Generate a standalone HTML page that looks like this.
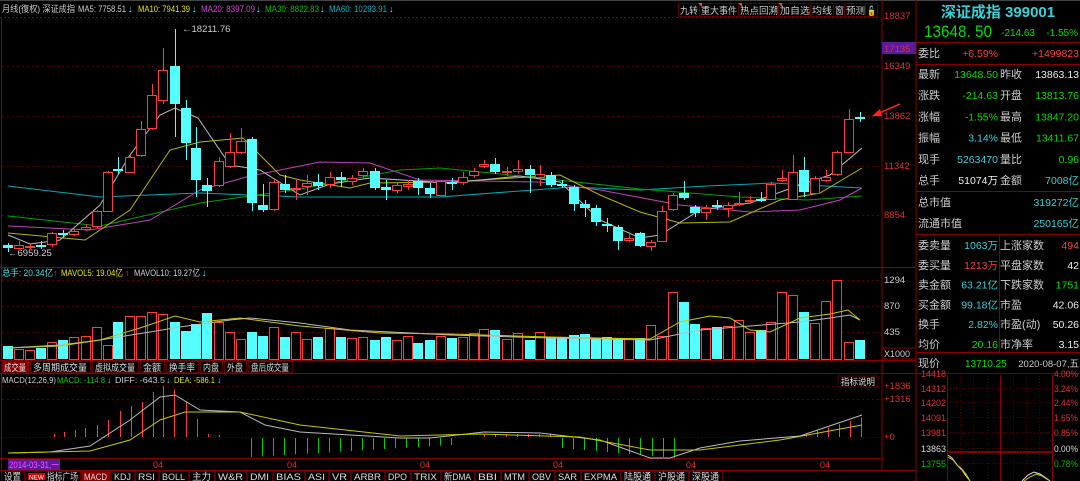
<!DOCTYPE html>
<html><head><meta charset="utf-8">
<style>
html,body{margin:0;padding:0;background:#000;width:1080px;height:481px;overflow:hidden}
svg{display:block}
text{font-family:"Liberation Sans","Noto Sans CJK SC",sans-serif}
</style></head><body>
<svg id="s" width="1080" height="481" xmlns="http://www.w3.org/2000/svg"></svg>
<script>
const S=document.getElementById('s');let h='';
const R='#8a0000',CY='#54ffff',RD='#ff3c3c',GR='#00d000';
function L(x1,y1,x2,y2,c,w,d){h+=`<line x1="${x1}" y1="${y1}" x2="${x2}" y2="${y2}" stroke="${c}" stroke-width="${w||1}"${d?` stroke-dasharray="${d}"`:''}/>`}
function Rc(x,y,w,hh,f,s){h+=`<rect x="${x}" y="${y}" width="${w}" height="${hh}" fill="${f||'none'}"${s?` stroke="${s}"`:''}/>`}
function T(x,y,t,c,sz,a,b,len){h+=`<text x="${x}" y="${y}" fill="${c}" font-size="${sz||11}"${a?` text-anchor="${a}"`:''}${b?' font-weight="bold"':''}${len?` textLength="${len}" lengthAdjust="spacingAndGlyphs"`:''}>${t}</text>`}
function P(pts,c,w){h+=`<polyline fill="none" stroke="${c}" stroke-width="${w||1}" points="${pts.map(p=>p.join(',')).join(' ')}"/>`}
L(0,0.5,1080,0.5,'#444');
L(882,0,882,470,R);L(916,0,916,481,R);
L(0,17.5,880,17.5,R,1,'2,2');
L(0,267.5,916,267.5,R);L(0,360.5,916,360.5,R);L(0,373.5,916,373.5,R);
L(0,458.5,882,458.5,R);L(0,470.5,916,470.5,R);
L(1.5,17,1.5,470,R);
[66,116,166,215].forEach(y=>L(2,y+.5,880,y+.5,'#5a0000',1,'2,3'));
[280,306,332].forEach(y=>L(2,y+.5,880,y+.5,'#5a0000',1,'2,3'));
[386,399].forEach(y=>L(2,y+.5,880,y+.5,'#5a0000',1,'2,3'));
T(2,12,'月线(復权) 深证成指','#ccc',9,0,0,73);
T(78,12,'MA5: 7758.51','#ccc',9,0,0,48);T(128,12,'↓','#54ffff',9);
T(138,12,'MA10: 7941.39','#e6e600',9,0,0,52);T(192,12,'↓','#54ffff',9);
T(201,12,'MA20: 8397.09','#e040e0',9,0,0,54);T(256,12,'↓','#54ffff',9);
T(265,12,'MA30: 8822.83','#00c000',9,0,0,54);T(320,12,'↓','#54ffff',9);
T(329,12,'MA60: 10293.91','#00b8c8',9,0,0,58);T(389,12,'↓','#54ffff',9);
const bt=[['九转',680,18],['重大事件',701,36],['热点回溯',740,38],['加自选',780,30],['均线',812,20],['窗',835,9],['预测',846,19],['🔓',867,9]];
bt.forEach(b=>{Rc(b[1]-1.5,3.5,b[2]+3,13,'#000','#5a0000');T(b[1],14,b[0],'#ccc',9.5,0,0,b[2])});
h+=`<polygon points="698,3 702,3 702,7" fill="${RD}"/><polygon points="738,3 742,3 742,7" fill="${RD}"/><polygon points="778,3 782,3 782,7" fill="${RD}"/>`;
[[18837,19],[16349,69],[13862,119],[11342,169],[8854,218]].forEach(a=>T(884,a[1],a[0],'#e03030',9.5));
Rc(882,42,34,12,'#5a1a9a');T(884,52,'17135','#e03030',9.5);
[[1294,283],[870,309],[435,335]].forEach(a=>T(884,a[1],a[0],'#ccc',9.5));
Rc(882,348,34,11,'#000','#8a0000');T(884,357,'X1000','#ccc',9);
[['+1836',389],['+1316',402],['+0',440]].forEach(a=>T(884,a[1],a[0],'#e03030',9.5));
const C=[[8,245,248,243,252,0],[19,245,248,241,249,1],[30,246,247,243,249,1],[41,245,246,241,249,0],[52,233,244,232,247,1],[63,233,235,230,237,0],[74,231,234,229,236,1],[86,227,229,224,231,1],[97,211,226,210,228,1],[108,172,211,171,212,1],[118,169,170,157,174,0],[130,157,172,155,173,1],[141,129,155,121,157,1],[152,95,128,84,130,1],[163,70,100,48,104,1],[175,66,104,29,137,0],[186,108,143,100,160,0],[196,148,180,127,197,0],[207,185,191,178,207,0],[219,161,185,157,187,1],[230,152,166,133,168,1],[241,141,152,128,154,1],[252,139,203,137,211,0],[263,205,210,184,212,0],[274,182,209,180,211,1],[285,184,190,175,193,0],[296,188,189,180,200,1],[307,183,186,175,195,1],[318,182,186,174,190,0],[330,177,184,172,188,1],[341,177,180,172,187,0],[352,178,181,175,185,1],[363,171,175,168,178,1],[375,171,188,168,190,0],[386,187,190,180,200,0],[397,185,190,182,193,1],[408,184,186,180,190,1],[418,181,188,178,195,0],[430,188,194,183,198,0],[441,181,195,180,196,1],[452,182,183,178,190,0],[463,177,182,172,185,1],[474,171,175,168,178,1],[484,164,166,160,168,1],[495,164,172,158,174,0],[507,171,172,167,176,1],[518,169,171,160,174,1],[530,169,175,165,193,0],[540,174,177,165,186,1],[551,175,185,172,187,0],[562,184,185,180,188,0],[574,187,204,185,211,0],[585,204,208,200,217,0],[596,208,222,205,226,0],[607,224,225,218,232,0],[618,227,241,225,250,0],[629,238,240,232,242,1],[640,233,246,232,247,0],[651,242,246,240,251,1],[662,211,241,206,242,1],[673,195,209,193,211,1],[684,193,198,181,200,0],[695,207,213,205,217,0],[706,208,212,205,220,1],[717,205,207,200,210,0],[728,205,208,202,217,1],[739,203,204,192,206,1],[750,200,201,196,204,1],[761,199,200,192,202,0],[771,184,199,182,200,1],[782,178,180,170,182,1],[793,172,199,155,200,1],[804,170,192,157,197,0],[815,178,193,176,194,1],[826,177,180,170,182,1],[837,152,174,151,176,1],[849,119,152,109,153,1],[860,117,118,112,122,0]];
P([[8,186],[100,197],[200,193],[300,197],[440,197],[573,187],[640,190],[707,186],[773,183],[807,185],[862,188]],'#00a8b8');
P([[8,216],[100,226],[200,203],[300,189],[400,170],[440,168],[540,178],[640,189],[740,197],[807,200],[862,196]],'#00a000');
P([[8,226],[90,230],[150,220],[200,190],[250,176],[320,162],[370,163],[420,180],[540,182],[600,190],[680,205],[750,212],[800,210],[840,200],[862,188]],'#c040c0');
P([[8,233],[85,240],[130,210],[170,150],[200,142],[243,138],[280,175],[300,180],[350,188],[370,183],[450,182],[560,175],[600,195],[640,212],[680,223],[730,222],[780,200],[820,193],[862,168]],'#b8b800');
P([[8,235],[30,244],[60,240],[100,205],[130,155],[160,115],[175,108],[198,118],[230,165],[260,170],[300,195],[330,184],[370,178],[450,183],[520,176],[560,182],[600,220],[640,238],[660,235],[700,210],[750,203],[800,185],[830,175],[862,148]],'#bbb');
C.forEach(c=>{const col=c[5]?RD:CY;L(c[0]+.5,c[3],c[0]+.5,c[4],col);
 if(c[5])Rc(c[0]-4.5,c[1]+.5,9,Math.max(1,c[2]-c[1]),'#000',col);else Rc(c[0]-5,c[1],10,Math.max(2,c[2]-c[1]),CY);});
T(182,32,'←18211.76','#ccc',9.5);
T(8,256,'←6959.25','#ccc',9.5);
L(877,114,900,104,'#ff2020',1.5);h+=`<polygon points="872,116 880,109 882,116" fill="#ff2020"/>`;
T(2,276,'总手: 20.34亿','#54e0e0',9,0,0,51);T(53,276,'↑','#ff3030',9);
T(61,276,'MAVOL5: 19.04亿','#e6e600',9,0,0,62);T(125,276,'↑','#ff3030',9);
T(134,276,'MAVOL10: 19.27亿','#ccc',9,0,0,66);T(202,276,'↓','#54ffff',9);
let V=[346,349,350,348,342,340,337,336,327,345,322,316,316,312,314,322,331,324,313,322,332,339,332,336,327,337,332,339,337,328,337,338,337,340,337,340,336,343,340,336,338,337,333,329,330,339,333,340,332,337,337,335,334,338,337,338,338,338,325,336];
V=V.slice(0,60).concat([292,302,324,328,327,326,320,332,330,322,292,295,312,323,301,280,342]);
C.forEach((c,i)=>{const t=V[i]||340;if(c[5])Rc(c[0]-4.5,t+.5,9,359-t,'#000',RD);else Rc(c[0]-5,t,10,359-t,CY);});
P([[8,348],[60,345],[100,340],[150,332],[180,327],[230,320],[250,318],[300,323],[350,330],[450,335],[550,338],[650,340],[700,330],[750,326],[800,322],[830,318],[850,315],[860,320]],'#bbb');
P([[8,348],[60,346],[100,340],[140,328],[175,316],[200,322],[240,318],[300,326],[380,333],[450,334],[550,337],[650,339],[680,322],[710,316],[730,318],[750,330],[770,332],[800,318],[830,314],[848,310],[860,320]],'#c8c800');
const vt=[['成交量',1,28,1],['多周期成交量',30,60],['虚拟成交量',92,46],['金额',140,24],['换手率',166,32],['内盘',200,22],['外盘',224,22],['盘后成交量',248,44]];
vt.forEach(t=>{Rc(t[1]+.5,361.5,t[2],11,t[3]?'#8a0000':'#000','#5a0000');T(t[1]+3,371,t[0],'#ddd',9.5,0,0,t[2]-6)});
T(2,383,'MACD(12,26,9)','#ccc',8.5,0,0,54);T(57,383,'MACD: -114.8','#00d000',8.5,0,0,48);T(107,383,'↓','#54ffff',8.5);
T(115,383,'DIFF: -643.5','#ccc',8.5,0,0,50);T(166,383,'↓','#54ffff',8.5);T(174,383,'DEA: -586.1','#e6e600',8.5,0,0,41);T(217,383,'↓','#54ffff',8.5);
Rc(838,376,40,11,'#000','#5a0000');T(841,385,'指标说明','#ddd',9,0,0,34);
L(2,437.5,880,437.5,'#5a0000',1,'1,2');
const red=[[54,434],[64,432],[75,430],[85,428],[97,425],[108,420],[120,411],[131,406],[142,402],[153,392],[163,386],[174,389],[186,402],[197,419],[208,434],[219,435]];
red.forEach(b=>L(b[0]+.5,437,b[0]+.5,b[1],RD));
for(let x=251;x<=460;x+=11.1){const d=19-(x-251)*0.06;L(Math.round(x)+.5,438,Math.round(x)+.5,438+d,GR);}
for(let x=484;x<=551;x+=11){L(x+.5,437,x+.5,434,RD);}
for(let x=562;x<=675;x+=11.2){const d=10+((x-562)/113)*10;L(Math.round(x)+.5,438,Math.round(x)+.5,438+d,GR);}
for(let x=806;x<=862;x+=11){const d=3+(x-806)*0.3;L(x+.5,437,x+.5,437-d,RD);}
P([[8,453],[50,452],[90,446],[130,420],[160,397],[175,395],[200,410],[240,412],[265,425],[300,432],[400,438],[430,438],[484,432],[540,433],[600,440],[650,458],[670,458],[700,448],[740,441],[800,436],[862,415]],'#bbb');
P([[8,453],[90,451],[130,440],[160,420],[185,412],[240,412],[300,425],[400,436],[480,434],[580,437],[650,450],[700,450],[780,440],[862,425]],'#c8c800');
Rc(8,459,52,11,'#5a1a9a');T(9,468,'2014-03-31,一','#ff4fff',9,0,0,50);
[153,287,420,553,686,820].forEach(x=>T(x,468,'04','#e03030',9));
const bt2=['设置','NEW','MACD','KDJ','RSI','BOLL','主力','W&R','DMI','BIAS','ASI','VR','ARBR','DPO','TRIX','新DMA','BBI','MTM','OBV','SAR','EXPMA','陆股通','沪股通','深股通'];
const bw=[24,56,30,24,24,30,26,32,26,32,24,22,34,26,30,34,26,28,26,26,40,34,34,34];
let bx=1;bt2.forEach((t,i)=>{const w=bw[i];Rc(bx+.5,471.5,w-1,10,t=='MACD'?'#8a0000':'#000','#5a0000');
 if(i==1){Rc(bx+3,473,17,7,'#e00000');T(bx+4,479.5,'NEW','#fff',6,0,0,15);T(bx+22,480,'指标广场','#ddd',9.5,0,0,31);}else T(bx+3,480,t,'#ddd',9.5,0,0,w-7);bx+=w;});
T(998,17,'深证成指 399001','#38d0d8',15,'middle',true);
T(924,37,'13648. 50','#00e000',17,0,0,68);T(1035,36,'-214.63','#00e000',10,'end');T(1078,36,'-1.55%','#00e000',10,'end');
L(916,42.5,1080,42.5,R);
T(918,57,'委比','#ccc',11);T(998,57,'+6.59%','#ff3c3c',10.5,'end');T(1079,57,'+1499823','#ff3c3c',10.5,'end');
L(916,64.5,1080,64.5,R);
const rows=[['最新','13648.50','#00e000','昨收','13863.13','#eee'],['涨跌','-214.63','#00e000','开盘','13813.76','#00e000'],['涨幅','-1.55%','#00e000','最高','13847.20','#00e000'],['振幅','3.14%','#38d0d8','最低','13411.67','#00e000'],['现手','5263470','#38d0d8','量比','0.96','#00e000'],['总手','51074万','#eee','金额','7008亿','#38d0d8']];
rows.forEach((r,i)=>{const y=78+i*21.2;T(918,y,r[0],'#ccc',11);T(998,y,r[1],r[2],10.5,'end');T(1000,y,r[3],'#ccc',11);T(1079,y,r[4],r[5],10.5,'end')});
L(916,191.5,1080,191.5,R);
T(918,206,'总市值','#ccc',11);T(1079,206,'319272亿','#38d0d8',10.5,'end');
T(918,227,'流通市值','#ccc',11);T(1079,227,'250165亿','#38d0d8',10.5,'end');
L(916,234.5,1080,234.5,R);L(999.5,234,999.5,353,R);
const r2=[['委卖量','1063万','#38d0d8','上涨家数','494','#ff3c3c'],['委买量','1213万','#ff3c3c','平盘家数','42','#eee'],['卖金额','63.21亿','#38d0d8','下跌家数','1751','#00e000'],['买金额','99.18亿','#38d0d8','市盈','42.06','#eee'],['换手','2.82%','#38d0d8','市盈(动)','50.26','#eee'],['均价','20.16','#00e000','市净率','3.15','#eee']];
r2.forEach((r,i)=>{const y=249+i*19.8;T(918,y,r[0],'#ccc',11);T(998,y,r[1],r[2],10.5,'end');T(1000,y,r[3],'#ccc',11);T(1079,y,r[4],r[5],10.5,'end')});
L(916,352.5,1080,352.5,R);
T(918,367,'现价','#ccc',11);T(965,367,'13710.25','#00e000',10);T(1079,367,'2020-08-07,五','#ccc',9.5,'end');
L(916,373.5,1080,373.5,R);
L(947.5,375,947.5,481,R);L(1052.5,375,1052.5,481,R);L(1000.5,375,1000.5,481,R);
[960,973,987,1013,1026,1039].forEach(x=>L(x+.5,376,x+.5,481,'#5a0000',1,'1,2'));
const ml=[['14418','4.00%',376,'#e03030'],['14312','3.24%',391,'#e03030'],['14202','2.44%',405,'#e03030'],['14091','1.65%',420,'#e03030'],['13981','0.85%',435,'#e03030'],['13863','0.00%',451,'#ddd'],['13755','0.78%',466,'#00c000']];
ml.forEach(m=>{L(947,m[2]-2.5,1052,m[2]-2.5,'#5a0000',1,'1,2');T(946,m[2]+1,m[0],m[3],9,'end');T(1054,m[2]+1,m[1],m[3],9,0,0,24)});
L(947,452,1052,452,'#aa0000',1.5);
P([[948,455],[952,458],[955,462],[958,466],[962,470],[966,476],[970,481]],'#ddd');
P([[948,457],[953,460],[957,465],[961,468],[966,474],[970,481]],'#c8c800');
P([[1022,481],[1028,475],[1034,472],[1040,474],[1046,478],[1050,481]],'#ddd');
P([[1024,481],[1030,477],[1036,474],[1042,476],[1048,480]],'#c8c800');
S.innerHTML=h;
</script>
</body></html>
